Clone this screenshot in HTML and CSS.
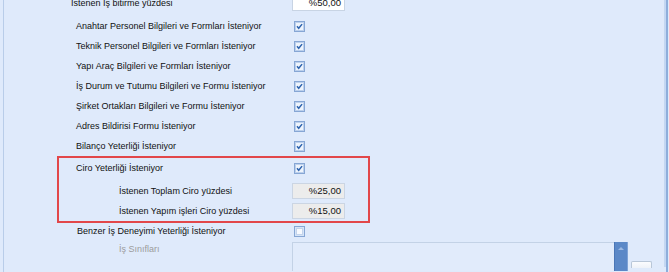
FILE: index.html
```html
<!DOCTYPE html>
<html lang="tr">
<head>
  <meta charset="UTF-8" />
  <title>Yeterlik Kriterleri</title>
  <link rel="stylesheet" href="styles.css">
</head>
<body>
  <div class="frame">
    <div class="panel">

      <div class="row row-top">
        <span class="label label-top">İstenen İş bitirme yüzdesi</span>
        <span class="field field-white">%50,00</span>
      </div>

      <div class="row">
        <span class="label">Anahtar Personel Bilgileri ve Formları İsteniyor</span>
        <svg class="check" viewBox="0 0 11 11"><rect x="0.5" y="0.5" width="10" height="10" fill="#d6e4f7" stroke="#86a6d4"/><rect x="1.5" y="1.5" width="8" height="8" fill="#eef4fc" stroke="#bcd0ec"/><path d="M3 5.3 L4.7 7.3 L8.1 3.1" fill="none" stroke="#2d63ae" stroke-width="1.5"/></svg>
      </div>
      <div class="row">
        <span class="label">Teknik Personel Bilgileri ve Formları İsteniyor</span>
        <svg class="check" viewBox="0 0 11 11"><rect x="0.5" y="0.5" width="10" height="10" fill="#d6e4f7" stroke="#86a6d4"/><rect x="1.5" y="1.5" width="8" height="8" fill="#eef4fc" stroke="#bcd0ec"/><path d="M3 5.3 L4.7 7.3 L8.1 3.1" fill="none" stroke="#2d63ae" stroke-width="1.5"/></svg>
      </div>
      <div class="row">
        <span class="label">Yapı Araç Bilgileri ve Formları İsteniyor</span>
        <svg class="check" viewBox="0 0 11 11"><rect x="0.5" y="0.5" width="10" height="10" fill="#d6e4f7" stroke="#86a6d4"/><rect x="1.5" y="1.5" width="8" height="8" fill="#eef4fc" stroke="#bcd0ec"/><path d="M3 5.3 L4.7 7.3 L8.1 3.1" fill="none" stroke="#2d63ae" stroke-width="1.5"/></svg>
      </div>
      <div class="row">
        <span class="label">İş Durum ve Tutumu Bilgileri ve Formu İsteniyor</span>
        <svg class="check" viewBox="0 0 11 11"><rect x="0.5" y="0.5" width="10" height="10" fill="#d6e4f7" stroke="#86a6d4"/><rect x="1.5" y="1.5" width="8" height="8" fill="#eef4fc" stroke="#bcd0ec"/><path d="M3 5.3 L4.7 7.3 L8.1 3.1" fill="none" stroke="#2d63ae" stroke-width="1.5"/></svg>
      </div>
      <div class="row">
        <span class="label">Şirket Ortakları Bilgileri ve Formu İsteniyor</span>
        <svg class="check" viewBox="0 0 11 11"><rect x="0.5" y="0.5" width="10" height="10" fill="#d6e4f7" stroke="#86a6d4"/><rect x="1.5" y="1.5" width="8" height="8" fill="#eef4fc" stroke="#bcd0ec"/><path d="M3 5.3 L4.7 7.3 L8.1 3.1" fill="none" stroke="#2d63ae" stroke-width="1.5"/></svg>
      </div>
      <div class="row">
        <span class="label">Adres Bildirisi Formu İsteniyor</span>
        <svg class="check" viewBox="0 0 11 11"><rect x="0.5" y="0.5" width="10" height="10" fill="#d6e4f7" stroke="#86a6d4"/><rect x="1.5" y="1.5" width="8" height="8" fill="#eef4fc" stroke="#bcd0ec"/><path d="M3 5.3 L4.7 7.3 L8.1 3.1" fill="none" stroke="#2d63ae" stroke-width="1.5"/></svg>
      </div>
      <div class="row">
        <span class="label">Bilanço Yeterliği İsteniyor</span>
        <svg class="check" viewBox="0 0 11 11"><rect x="0.5" y="0.5" width="10" height="10" fill="#d6e4f7" stroke="#86a6d4"/><rect x="1.5" y="1.5" width="8" height="8" fill="#eef4fc" stroke="#bcd0ec"/><path d="M3 5.3 L4.7 7.3 L8.1 3.1" fill="none" stroke="#2d63ae" stroke-width="1.5"/></svg>
      </div>

      <div class="box">
        <div class="row">
          <span class="label">Ciro Yeterliği İsteniyor</span>
          <svg class="check" viewBox="0 0 11 11"><rect x="0.5" y="0.5" width="10" height="10" fill="#d6e4f7" stroke="#86a6d4"/><rect x="1.5" y="1.5" width="8" height="8" fill="#eef4fc" stroke="#bcd0ec"/><path d="M3 5.3 L4.7 7.3 L8.1 3.1" fill="none" stroke="#2d63ae" stroke-width="1.5"/></svg>
        </div>
        <div class="row row-gap">
          <span class="label label-sub">İstenen Toplam Ciro yüzdesi</span>
          <span class="field">%25,00</span>
        </div>
        <div class="row">
          <span class="label label-sub">İstenen Yapım işleri Ciro yüzdesi</span>
          <span class="field">%15,00</span>
        </div>
      </div>

      <div class="row row-short">
        <span class="label label-benzer">Benzer İş Deneyimi Yeterliği İsteniyor</span>
        <svg class="check" viewBox="0 0 11 11"><rect x="0.5" y="0.5" width="10" height="10" fill="#d6e4f7" stroke="#86a6d4"/><rect x="2.5" y="2.5" width="6" height="6" fill="#f7faff" stroke="#c3d4ec"/></svg>
      </div>

      <div class="row row-list">
        <span class="label label-sub disabled">İş Sınıfları</span>
        <div class="listbox">
          <div class="scrollbar"><span class="arrow"></span></div>
        </div>
        <span class="side-btn"></span>
      </div>

    </div>
  </div>
</body>
</html>
```

FILE: styles.css
```css
body {
  margin: 0;
  background: #dfeafb;
  font-family: 'Liberation Sans', Arial, sans-serif;
  font-size: 9px;
  color: #111;
  overflow: hidden;
}

.frame {
  height: 272px;
  overflow: hidden;
  margin: 0 1px 0 3px;
  border-left: 1px solid #b9cde9;
  border-right: 2px solid #8eaedb;
}

.panel {
  height: 100%;
  border-right: 2px solid #c4d7f2;
  background: #dfeafb;
  padding-left: 53px;
}

.row {
  display: grid;
  grid-template-columns: 235px auto;
  align-items: center;
  height: 20px;
}

.row-top {
  height: 16px;
  margin-top: -5px;
  margin-bottom: 5px;
}

.row-gap {
  margin-top: 3px;
}

.row-short {
  height: 16px;
}

.label {
  padding-left: 19px;
  white-space: nowrap;
}

.label-top {
  padding-left: 14px;
}

.label-sub {
  padding-left: 62px;
}

.label-benzer {
  padding-left: 20px;
}

.disabled {
  color: #9c9c9c;
}

.check {
  width: 11px;
  height: 11px;
  margin-left: 2px;
}

.field {
  box-sizing: border-box;
  width: 53px;
  height: 16px;
  line-height: 14px;
  padding-right: 3px;
  text-align: right;
  background: #ececec;
  border: 1px solid #cbd5e3;
  font-size: 9.5px;
}

.field-white {
  background: #ffffff;
  border-color: #c8d4e4;
}

.box {
  width: 309px;
  border: 2px solid #e2474a;
}

.box .row {
  grid-template-columns: 233px auto;
}

.box .label {
  padding-left: 17px;
}

.box .label-sub {
  padding-left: 60px;
}

.row-list {
  grid-template-columns: 235px 336px auto;
  align-items: start;
  height: 32px;
}

.row-list .label {
  line-height: 20px;
}

.listbox {
  display: flex;
  justify-content: flex-end;
  box-sizing: border-box;
  height: 29px;
  margin-top: 3px;
  border: 1px solid #c3d2e6;
  border-bottom: none;
  border-right: none;
  background: #e1ebfb;
}

.scrollbar {
  width: 14px;
  margin-top: -1px;
  background: #5b88c7;
  border-left: 1px solid #4a76b6;
  border-right: 1px solid #7ea2d6;
  box-sizing: border-box;
}

.arrow {
  display: block;
  width: 0;
  height: 0;
  margin: 5px auto 0;
  border-left: 3px solid transparent;
  border-right: 3px solid transparent;
  border-bottom: 3px solid #9bb8e2;
}

.side-btn {
  width: 21px;
  height: 7px;
  margin: 22px 0 0 3px;
  box-sizing: border-box;
  border: 1px solid #b9c7d8;
  border-bottom: none;
  border-radius: 2px 2px 0 0;
  background: linear-gradient(#fbfcfe, #eef2f8);
}
```
